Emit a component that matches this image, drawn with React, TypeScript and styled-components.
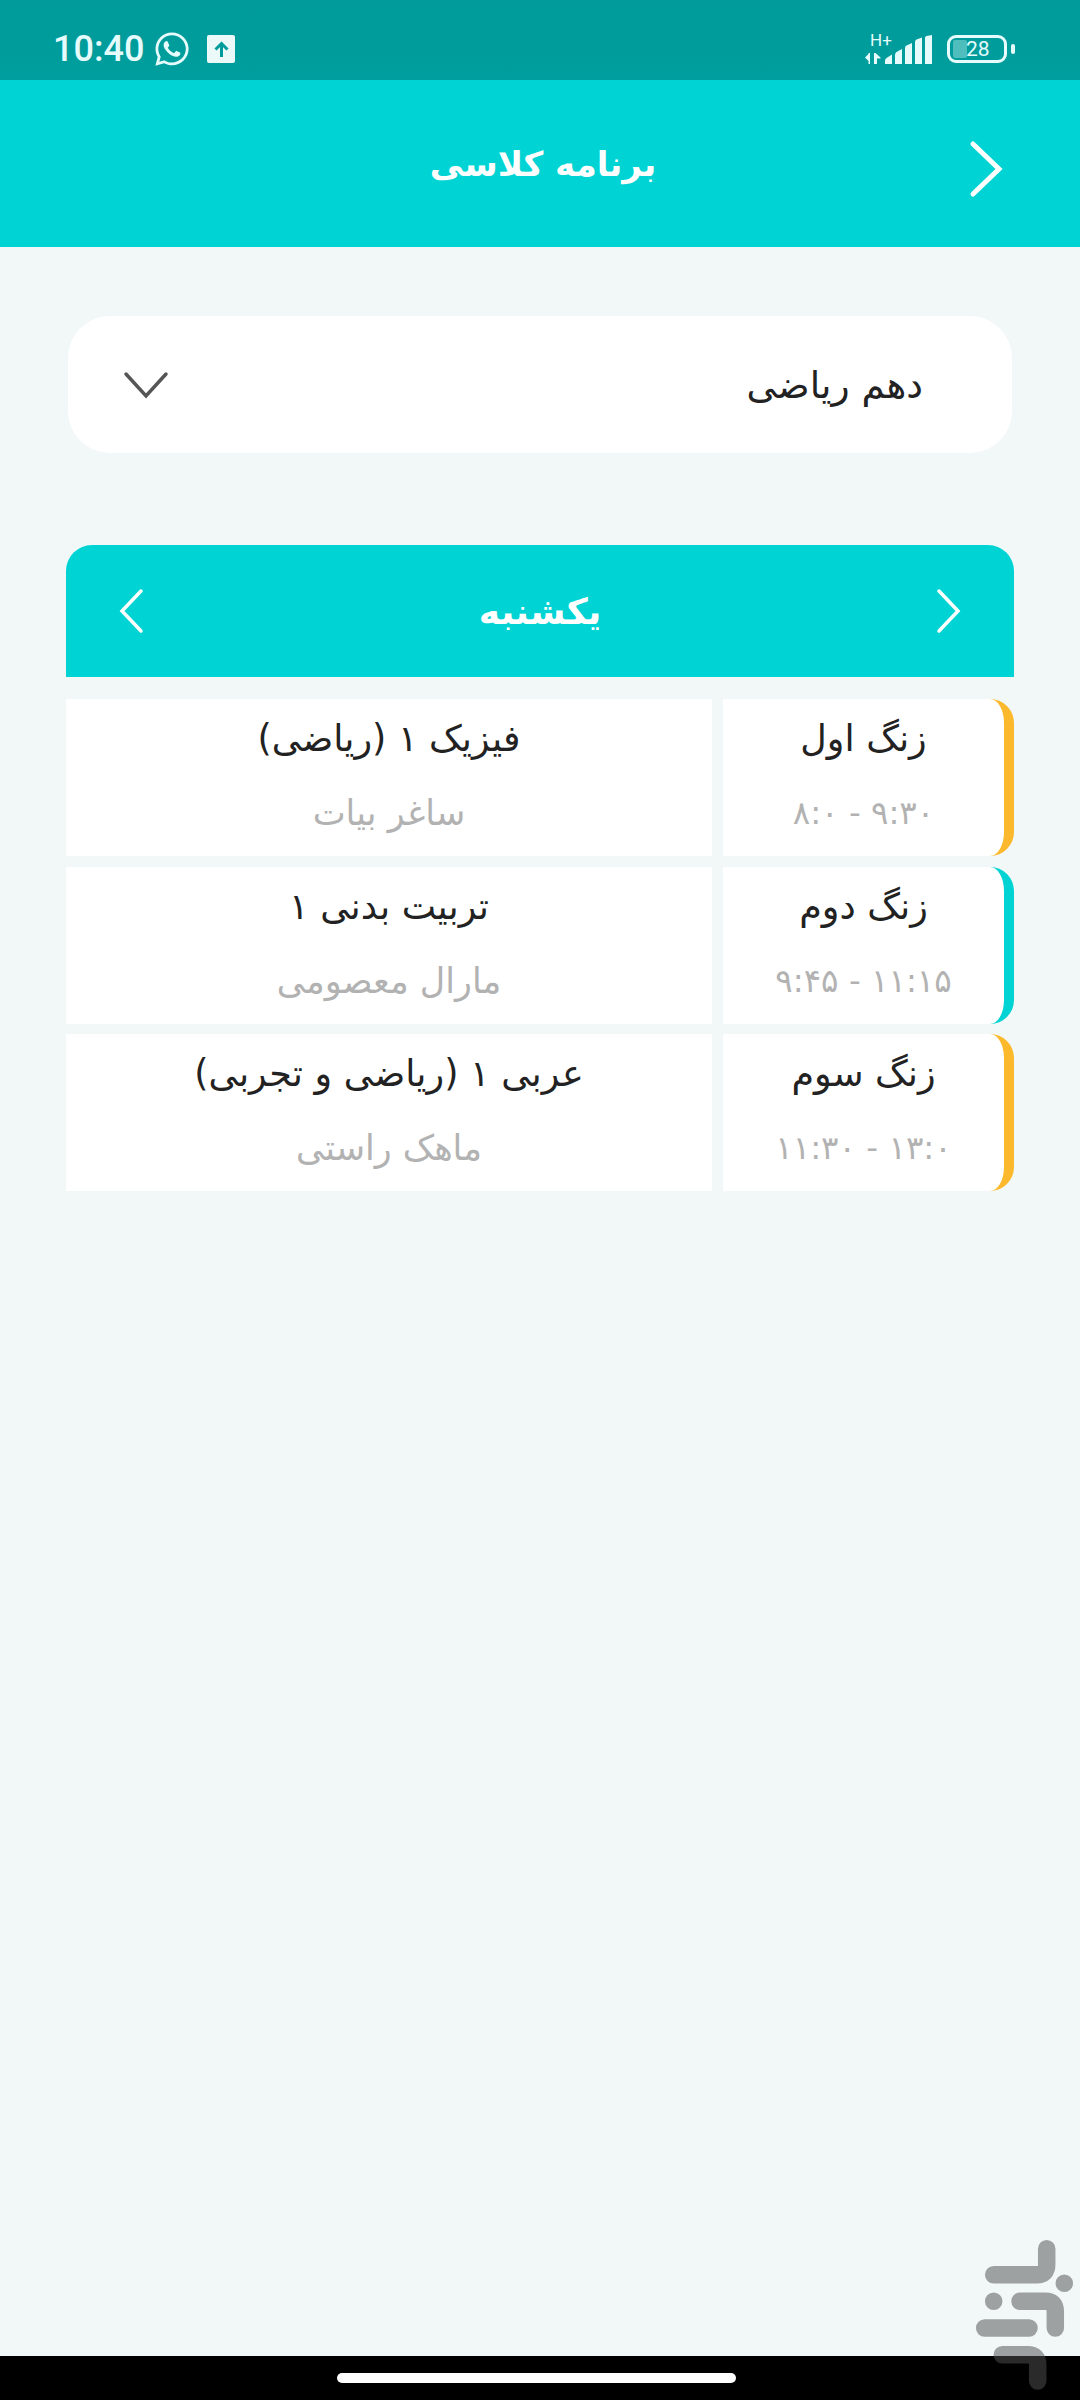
import React from 'react';
import styled, { createGlobalStyle } from 'styled-components';
import { FaWhatsapp } from 'react-icons/fa';

const TEAL = '#00d3d3';
const AMBER = '#fdb92e';
const PERSIAN = '"DejaVu Sans", "Noto Sans", sans-serif';

const periods = [
    { bell: 'زنگ اول', time: '۹:۳۰ - ۸:۰', subject: 'فیزیک ۱ (ریاضی)', teacher: 'ساغر بیات', accent: AMBER },
    { bell: 'زنگ دوم', time: '۱۱:۱۵ - ۹:۴۵', subject: 'تربیت بدنی ۱', teacher: 'مارال معصومی', accent: TEAL },
    { bell: 'زنگ سوم', time: '۱۳:۰ - ۱۱:۳۰', subject: 'عربی ۱ (ریاضی و تجربی)', teacher: 'ماهک راستی', accent: AMBER },
];

const Chevron = ({ dir, size, color = '#fff', width = 4 }: { dir: 'left' | 'right' | 'down'; size: [number, number]; color?: string; width?: number }) => {
    const [w, h] = size;
    const points = dir === 'down'
        ? `1,1 ${w / 2},${h - 1} ${w - 1},1`
        : dir === 'right'
            ? `1,1 ${w - 2},${h / 2} 1,${h - 1}`
            : `${w - 1},1 2,${h / 2} ${w - 1},${h - 1}`;
    return (
        <svg width={w} height={h} viewBox={`0 0 ${w} ${h}`} fill="none" style={{ overflow: 'visible', display: 'block' }}>
            <polyline points={points} stroke={color} strokeWidth={width} strokeLinecap="round" strokeLinejoin="miter" />
        </svg>
    );
};

const SignalIcon = () => (
    <svg width="67" height="29" viewBox="0 0 67 29" fill="#e6fbfb">
        <path d="M0 22.500l3.500-3.500V18h1.500v11H3.500v-3zM9 18h1.500l5 4.500v1h-3.500V29H9z" />
        <path d="M20 29v-3.500q0-1.500 1.500-2.500l5.500-3.500V29zM30 29V20q0-2 1.500-3l5.500-3V29zM40 29V13q0-2 1.500-2.500L47 8V29zM50 29V7q0-2 1.500-2.500L57 2.500V29zM60 29V3q0-1.500 1.500-2L67 0V29z" />
    </svg>
);

const BazaarMark = () => (
    <svg width="110" height="170" viewBox="0 0 110 170" fill="none" stroke="rgba(81,81,81,.52)" strokeWidth="17.500" strokeLinecap="round">
        <path d="M76.700 18.700V34.700q0 10-10 10H23.700" />
        <path d="M94.300 53.300h.01M23.700 71.300h.01" />
        <path d="M50 71.300H75.300q10 0 10 10V98" />
        <path d="M14.700 98H59" />
        <path d="M32.300 124.700H57.700q10 0 10 10V151" />
    </svg>
);

export default function App() {
    return (
        <>
            <GlobalStyle />
            <Screen>
                <StatusBar>
                    <StatusGroup>
                        <Clock>10:40</Clock>
                        <WhatsappIcon><FaWhatsapp size={38} /></WhatsappIcon>
                        <UploadBadge>
                            <svg width="17" height="17" viewBox="0 0 17 17" fill="none" stroke="#009c9c" strokeWidth="3">
                                <path d="M8.500 16V3M2.500 8.500l6-6 6 6" />
                            </svg>
                        </UploadBadge>
                    </StatusGroup>
                    <StatusGroup>
                        <Network>
                            <NetworkLabel>H+</NetworkLabel>
                            <SignalIcon />
                        </Network>
                        <Battery>
                            <BatteryBody>
                                <BatteryLevel />
                                <BatteryText>28</BatteryText>
                            </BatteryBody>
                            <BatteryCap />
                        </Battery>
                    </StatusGroup>
                </StatusBar>

                <Header>
                    <HeaderTitle>برنامه کلاسی</HeaderTitle>
                    <BackButton><Chevron dir="right" size={[29, 52]} width={5} /></BackButton>
                </Header>

                <Content>
                    <ClassSelect>
                        <SelectValue>دهم ریاضی</SelectValue>
                        <Chevron dir="down" size={[42, 24]} color="#555" width={3.500} />
                    </ClassSelect>

                    <Schedule>
                        <DayBar>
                            <Chevron dir="right" size={[22, 42]} width={3.500} />
                            <DayName>یکشنبه</DayName>
                            <Chevron dir="left" size={[22, 42]} width={3.500} />
                        </DayBar>
                        <Rows>
                            {periods.map(p => (
                                <Row key={p.bell}>
                                    <BellCell $accent={p.accent}>
                                        <Primary>{p.bell}</Primary>
                                        <TimeRange>{p.time}</TimeRange>
                                    </BellCell>
                                    <LessonCell>
                                        <Primary>{p.subject}</Primary>
                                        <Secondary>{p.teacher}</Secondary>
                                    </LessonCell>
                                </Row>
                            ))}
                        </Rows>
                    </Schedule>
                </Content>

                <NavBar><HomePill /></NavBar>
                <Watermark><BazaarMark /></Watermark>
            </Screen>
        </>
    );
}

const GlobalStyle = createGlobalStyle`
    html, body {
        margin: 0;
        padding: 0;
        background: #f2f8f8;
    }
`

const Screen = styled.div`
    position: relative;
    width: 1080px;
    height: 2400px;
    display: flex;
    flex-direction: column;
    overflow: hidden;
    background: #f2f8f8;
    font-family: ${PERSIAN};
`

const StatusBar = styled.div`
    height: 80px;
    flex: none;
    box-sizing: border-box;
    display: flex;
    align-items: center;
    justify-content: space-between;
    padding: 18px 65px 0 53px;
    background: linear-gradient(#009a9a, #009e9e);
    color: #e6fbfb;
    font-family: Roboto, sans-serif;
`

const StatusGroup = styled.div`
    display: flex;
    align-items: center;
`

const Clock = styled.span`
    font-size: 36px;
    font-weight: 500;
    line-height: 40px;
`

const WhatsappIcon = styled.span`
    display: flex;
    margin-left: 9px;
`

const UploadBadge = styled.span`
    display: flex;
    align-items: center;
    justify-content: center;
    width: 28px;
    height: 28px;
    margin-left: 16px;
    border-radius: 2px;
    background: #ebf9f9;
`

const Network = styled.div`
    position: relative;
    width: 67px;
    height: 29px;
    margin-right: 15px;
    margin-top: 1px;
`

const NetworkLabel = styled.span`
    position: absolute;
    left: 5px;
    top: -3px;
    font-size: 17px;
    line-height: 17px;
`

const Battery = styled.div`
    display: flex;
    align-items: center;
    gap: 4px;
`

const BatteryBody = styled.div`
    position: relative;
    width: 60px;
    height: 28px;
    box-sizing: border-box;
    border: 3px solid #e6fbfb;
    border-radius: 9px;
    display: flex;
    align-items: center;
    padding-left: 16px;
`

const BatteryLevel = styled.span`
    position: absolute;
    left: 3px;
    top: 2px;
    bottom: 2px;
    width: 14px;
    border-radius: 2px;
    background: rgba(230, 251, 251, 0.35);
`

const BatteryText = styled.span`
    position: relative;
    font-size: 21px;
    line-height: 22px;
`

const BatteryCap = styled.span`
    width: 4px;
    height: 10px;
    border-radius: 2px;
    background: #e6fbfb;
`

const Header = styled.header`
    position: relative;
    height: 167px;
    flex: none;
    display: flex;
    align-items: center;
    justify-content: center;
    background: ${TEAL};
    color: #fff;
`

const HeaderTitle = styled.h1`
    margin: 0 0 0 6px;
    direction: rtl;
    font-size: 34px;
    font-weight: 700;
`

const BackButton = styled.span`
    position: absolute;
    left: 972px;
    top: 63px;
`

const Content = styled.main`
    flex: 1;
    direction: rtl;
    padding-top: 69px;
`

const ClassSelect = styled.div`
    height: 137px;
    margin: 0 68px 92px;
    padding: 0 89px 0 57px;
    display: flex;
    align-items: center;
    justify-content: space-between;
    border-radius: 42px;
    background: #fff;
`

const SelectValue = styled.span`
    font-size: 37.500px;
    color: #222;
`

const Schedule = styled.section`
    margin: 0 66px;
`

const DayBar = styled.div`
    height: 132px;
    padding: 0 54px;
    display: flex;
    align-items: center;
    justify-content: space-between;
    border-radius: 26px 26px 0 0;
    background: ${TEAL};
    color: #fff;
`

const DayName = styled.span`
    font-size: 36px;
    font-weight: 700;
`

const Rows = styled.div`
    display: flex;
    flex-direction: column;
    gap: 10.500px;
    padding-top: 22px;
`

const Row = styled.div`
    display: grid;
    grid-template-columns: 291px 1fr;
    gap: 11px;
    height: 157px;
`

const Cell = styled.div`
    display: flex;
    flex-direction: column;
    align-items: center;
    background: #fff;
    box-sizing: border-box;
    padding-top: 15px;
`

const BellCell = styled(Cell)<{ $accent: string }>`
    border-right: 10px solid ${p => p.$accent};
    border-radius: 0 24px 24px 0;
`

const LessonCell = styled(Cell)``

const Primary = styled.span`
    font-size: 36.500px;
    line-height: 50px;
    color: #222;
`

const Secondary = styled.span`
    margin-top: 26px;
    font-size: 35px;
    line-height: 46px;
    color: #b2b2b2;
`

const TimeRange = styled(Secondary)`
    font-size: 32.500px;
`

const NavBar = styled.div`
    height: 44px;
    flex: none;
    display: flex;
    align-items: center;
    justify-content: center;
    background: #000;
`

const HomePill = styled.span`
    width: 399px;
    height: 10px;
    margin-left: -7px;
    border-radius: 5px;
    background: #fff;
`

const Watermark = styled.div`
    position: absolute;
    left: 970px;
    top: 2230px;
`
